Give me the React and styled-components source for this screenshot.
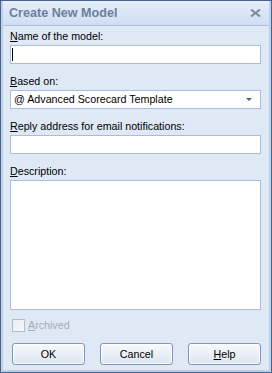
import React from "react";
import styled, { createGlobalStyle } from "styled-components";

const Global = createGlobalStyle`
  html, body { margin: 0; padding: 0; background: #ffffff; }
  * { box-sizing: border-box; }
`;

const Window = styled.div`
  width: 272px;
  height: 373px;
  border: 1px solid #46648e;
  box-shadow: inset 0 0 0 2px #bccfe9;
  background: #dfe9f6;
  display: flex;
  flex-direction: column;
  font-family: "Liberation Sans", Arial, sans-serif;
  font-size: 10.7px;
  color: #000;
`;

const TitleBar = styled.div`
  height: 25px;
  flex: none;
  display: flex;
  align-items: center;
  justify-content: space-between;
  padding: 0 8px 1px 6px;
  background: linear-gradient(#e5eef9, #d0def2);
  border-bottom: 1px solid #a9c2e1;
  margin: 0 2px;
`;

const Title = styled.div`
  font-weight: bold;
  font-size: 12.6px;
  color: #6c7f9c;
  letter-spacing: 0;
`;

const Content = styled.div`
  flex: 1;
  display: flex;
  flex-direction: column;
  padding: 4px 10px 0 9px;
`;

const Group = styled.div`
  display: flex;
  flex-direction: column;
  gap: 2px;
  margin-bottom: ${(p) => (p.$last ? 0 : 11)}px;
`;

const Label = styled.div`
  height: 13px;
  line-height: 13px;
  white-space: nowrap;
  color: ${(p) => (p.$disabled ? "#a3aab5" : "#000")};
`;

const Field = styled.div`
  height: ${(p) => p.$h || 19}px;
  background: #ffffff;
  border: 1px solid #a7bdda;
  display: flex;
  align-items: center;
  padding-left: ${(p) => p.$pl || 0}px;
  padding-right: 8px;
  white-space: nowrap;
`;

const Caret = styled.span`
  width: 1px;
  height: 13px;
  background: #000;
  margin-left: 1px;
`;

const SelectText = styled.span`
  flex: 1;
  line-height: 13px;
`;

const CheckRow = styled.div`
  display: flex;
  align-items: center;
  gap: 3px;
  margin-top: 8px;
  padding-left: 2px;
  height: 14px;
`;

const CheckBox = styled.span`
  width: 13px;
  height: 13px;
  border: 1px solid #b6bcc6;
  background: linear-gradient(135deg, #e9ecf0, #f7f8fa);
`;

const ButtonRow = styled.div`
  display: flex;
  gap: 15px;
  margin-top: 11px;
  padding-left: 2px;
`;

const Button = styled.div`
  width: 73px;
  height: 22px;
  border: 1px solid #7f96b7;
  border-radius: 3px;
  background: linear-gradient(#f7f9fc 0%, #eaf0f7 50%, #dbe5f1 100%);
  box-shadow: inset 0 0 0 1px rgba(255, 255, 255, 0.7);
  display: flex;
  align-items: center;
  justify-content: center;
  line-height: 13px;
`;

const Close = () => (
  <svg width="11" height="8" viewBox="0 0 11 8">
    <path d="M1 0.5 L10 7.5 M10 0.5 L1 7.5" stroke="#7b899e" strokeWidth="2" />
  </svg>
);

const Arrow = () => (
  <svg width="6" height="3" viewBox="0 0 6 3">
    <path d="M0 0 H6 L3 3 Z" fill="#4b6086" />
  </svg>
);

export default function App() {
  return (
    <>
      <Global />
      <Window>
        <TitleBar>
          <Title>Create New Model</Title>
          <Close />
        </TitleBar>
        <Content>
          <Group>
            <Label>
              <u>N</u>ame of the model:
            </Label>
            <Field>
              <Caret />
            </Field>
          </Group>
          <Group>
            <Label>
              <u>B</u>ased on:
            </Label>
            <Field $pl={3}>
              <SelectText>@ Advanced Scorecard Template</SelectText>
              <Arrow />
            </Field>
          </Group>
          <Group>
            <Label>
              <u>R</u>eply address for email notifications:
            </Label>
            <Field />
          </Group>
          <Group $last>
            <Label>
              <u>D</u>escription:
            </Label>
            <Field $h={130} />
          </Group>
          <CheckRow>
            <CheckBox />
            <Label $disabled>
              <u>A</u>rchived
            </Label>
          </CheckRow>
          <ButtonRow>
            <Button>OK</Button>
            <Button>Cancel</Button>
            <Button>
              <span>
                <u>H</u>elp
              </span>
            </Button>
          </ButtonRow>
        </Content>
      </Window>
    </>
  );
}
